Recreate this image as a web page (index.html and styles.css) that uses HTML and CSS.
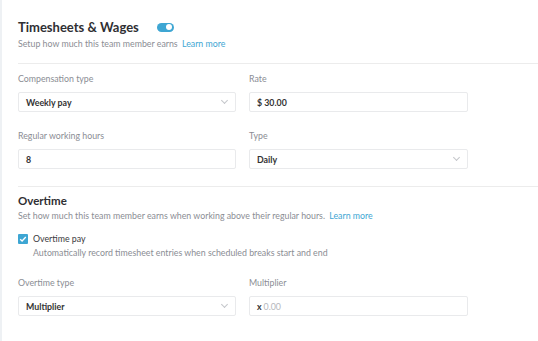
FILE: index.html
```html
<!DOCTYPE html>
<html lang="en">
<head>
    <meta charset="UTF-8">
    <meta name="viewport" content="width=device-width, initial-scale=1.0">
    <title>Timesheets &amp; Wages</title>
    <link rel="stylesheet" href="styles.css">
</head>
<body>
    <div class="panel">
        <div class="header">
            <div class="title-row">
                <h2>Timesheets &amp; Wages</h2>
                <span class="toggle"><span class="knob"></span></span>
            </div>
            <p class="hint">Setup how much this team member earns <a href="#">Learn more</a></p>
        </div>

        <div class="section">
            <div class="grid">
                <div class="field">
                    <label>Compensation type</label>
                    <div class="input select">Weekly pay<span class="chevron"></span></div>
                </div>
                <div class="field">
                    <label>Rate</label>
                    <div class="input">$ 30.00</div>
                </div>
                <div class="field">
                    <label>Regular working hours</label>
                    <div class="input">8</div>
                </div>
                <div class="field">
                    <label>Type</label>
                    <div class="input select">Daily<span class="chevron"></span></div>
                </div>
            </div>
        </div>

        <div class="section">
            <h3>Overtime</h3>
            <p class="hint">Set how much this team member earns when working above their regular hours. <a href="#">Learn more</a></p>
            <div class="check">
                <span class="box">
                    <svg width="8" height="8" viewBox="0 0 8 8"><path d="M1.2 4.2 L3.1 6 L6.8 2" fill="none" stroke="#fff" stroke-width="1.3"/></svg>
                </span>
                <span class="check-label">Overtime pay</span>
            </div>
            <p class="check-hint">Automatically record timesheet entries when scheduled breaks start and end</p>
            <div class="grid">
                <div class="field">
                    <label>Overtime type</label>
                    <div class="input select">Multiplier<span class="chevron"></span></div>
                </div>
                <div class="field">
                    <label>Multiplier</label>
                    <div class="input"><span class="prefix">x</span> <span class="placeholder">0.00</span></div>
                </div>
            </div>
        </div>
    </div>
</body>
</html>
```

FILE: styles.css
```css
/* Base */
body {
    margin: 0;
    font-family: Lato, "Liberation Sans", sans-serif;
    background-color: #fff;
    color: #333;
}

.panel {
    border-left: 2px solid #eef1f4;
    padding: 19px 0 0 16px;
    min-height: 341px;
    box-sizing: border-box;
}

.header {
    padding-bottom: 14px;
    border-bottom: 1px solid #ececec;
}

.title-row {
    display: flex;
    align-items: center;
    gap: 18px;
}

h2 {
    margin: 0;
    font-size: 13px;
    font-weight: 700;
    color: #2f2f33;
}

h3 {
    margin: 0;
    font-size: 11.5px;
    font-weight: 700;
    color: #2f2f33;
}

.toggle {
    width: 17px;
    height: 9px;
    border-radius: 5px;
    background-color: #3ea6d3;
    position: relative;
}

.knob {
    position: absolute;
    right: 2px;
    top: 1.5px;
    width: 6px;
    height: 6px;
    border-radius: 50%;
    background-color: #fff;
}

.hint {
    margin: 3px 0 0;
    font-size: 8.8px;
    color: #8b8d94;
}

.hint a {
    color: #3ea6d3;
    text-decoration: none;
    margin-left: 2px;
}

.section {
    padding: 9px 0 17px;
    border-bottom: 1px solid #ececec;
}

.section:last-child {
    border-bottom: none;
    padding-top: 7px;
}

.grid {
    display: grid;
    grid-template-columns: 218px 219px;
    column-gap: 13px;
    row-gap: 18px;
}

.field label {
    display: block;
    font-size: 8.8px;
    color: #8b8d94;
    margin-bottom: 8px;
}

.input {
    height: 20px;
    box-sizing: border-box;
    border: 1px solid #e9eaec;
    border-radius: 2px;
    padding: 0 7px;
    display: flex;
    align-items: center;
    font-size: 8.8px;
    font-weight: 700;
    color: #333;
    position: relative;
}

.chevron {
    position: absolute;
    right: 8px;
    top: 5px;
    width: 4px;
    height: 4px;
    border-right: 1px solid #c4c6ca;
    border-bottom: 1px solid #c4c6ca;
    transform: rotate(45deg);
}

.prefix {
    margin-right: 2px;
}

.placeholder {
    font-weight: 400;
    color: #b5b7bc;
}

.check {
    display: flex;
    align-items: center;
    gap: 5px;
    margin-top: 12px;
}

.box {
    width: 10px;
    height: 10px;
    border-radius: 1px;
    background-color: #3ea6d3;
    display: flex;
    align-items: center;
    justify-content: center;
}

.check-label {
    font-size: 8.8px;
    color: #3a3a3e;
}

.check-hint {
    margin: 3px 0 19px 15px;
    font-size: 8.8px;
    color: #8b8d94;
}
```
